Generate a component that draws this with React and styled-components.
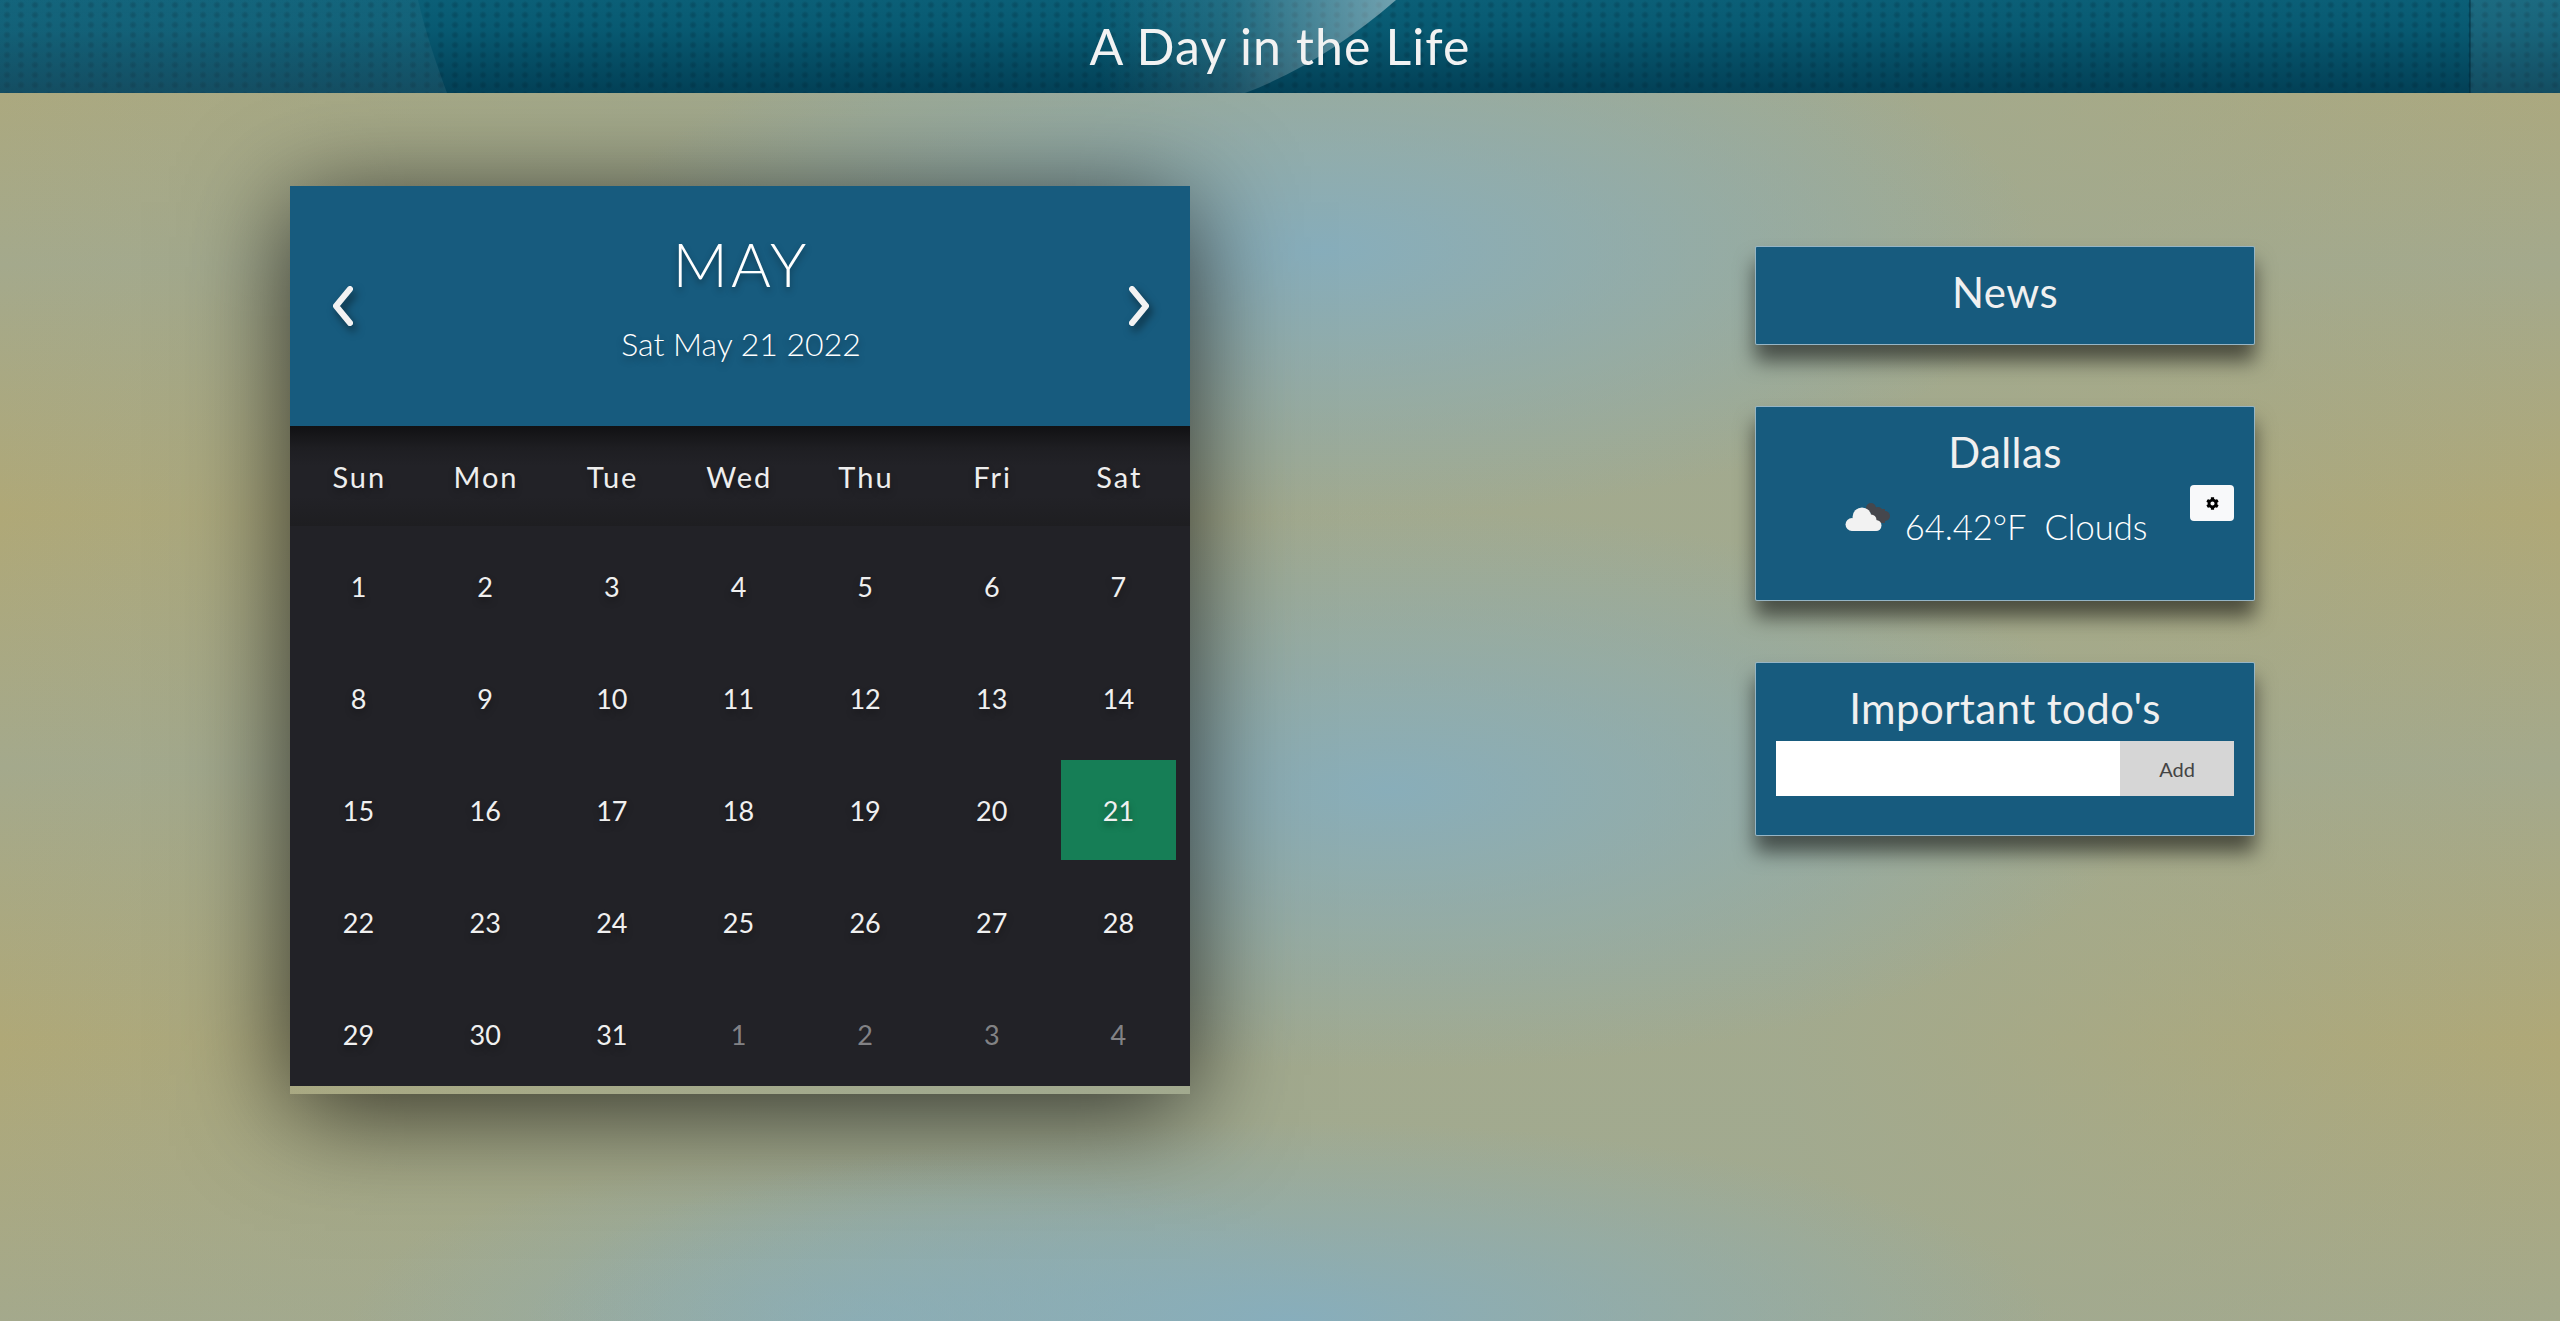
import React from "react";
import styled, { createGlobalStyle } from "styled-components";
import { FaCog } from "react-icons/fa";

const Global = createGlobalStyle`
  html, body { margin: 0; padding: 0; height: 100%; }
  body { font-family: "Lato", "Open Sans", sans-serif; color: #eee; overflow: hidden; }
  * { box-sizing: border-box; }
`;

const Page = styled.div`
  width: 2560px;
  height: 1321px;
  display: flex;
  flex-direction: column;
  background-color: #a4a98c;
  background-image:
    radial-gradient(ellipse 720px 270px at 1320px 250px, rgba(134,174,190,.95), rgba(134,174,190,0)),
    radial-gradient(ellipse 760px 280px at 1390px 790px, rgba(134,174,190,.9), rgba(134,174,190,0)),
    radial-gradient(ellipse 760px 200px at 1290px 1321px, rgba(134,174,190,.95), rgba(134,174,190,0)),
    radial-gradient(ellipse 520px 170px at 870px 1321px, rgba(134,174,190,.65), rgba(134,174,190,0)),
    linear-gradient(90deg, rgba(160,170,146,0) 0, rgba(160,170,146,.35) 12%, rgba(160,170,146,.85) 35%, rgba(160,170,146,.85) 70%, rgba(160,170,146,.2) 92%, rgba(160,170,146,0) 100%),
    linear-gradient(180deg,
      rgba(176,168,118,.6) 7%, rgba(164,169,140,.2) 20%, rgba(176,168,118,.95) 39%,
      rgba(164,169,140,.2) 58%, rgba(176,168,118,.95) 79%, rgba(164,169,140,.1) 100%);
`;

const Banner = styled.header`
  position: relative;
  flex: none;
  height: 93px;
  display: flex;
  align-items: center;
  justify-content: center;
  overflow: hidden;
  background-color: #04506b;
  background-image:
    radial-gradient(circle at 7px 5px, rgba(0,25,40,.24) 0, rgba(0,25,40,.16) 2px, rgba(0,25,40,0) 4px),
    linear-gradient(180deg, #0b5f77 0%, #085a72 30%, #024056 100%);
  background-size: 14px 10px, 100% 100%;
`;

const Swoosh = styled.svg`
  position: absolute;
  inset: 0;
  width: 100%;
  height: 100%;
`;

const BannerTitle = styled.h1`
  position: relative;
  margin: 0;
  font-size: 50px;
  font-weight: 400;
  letter-spacing: 1.1px;
  line-height: 93px;
  color: #f2f2f2;
`;

const Main = styled.main`
  display: flex;
  align-items: flex-start;
  padding: 93px 0 0 290px;
`;

const Calendar = styled.section`
  width: 900px;
  height: 908px;
  box-shadow: 0 16px 100px rgba(0,0,0,.72);
  text-shadow: 0 4px 7px rgba(0,0,0,.35);
`;

const MonthBar = styled.div`
  height: 240px;
  background: #175b7e;
  display: flex;
  align-items: center;
  justify-content: space-between;
  padding: 0 38px 0 40px;
`;

const Arrow = styled.svg`
  width: 28px;
  height: 42px;
  filter: drop-shadow(3px 5px 4px rgba(0,0,0,.5));
`;

const MonthText = styled.div`
  text-align: center;
  padding-bottom: 20px;
`;

const MonthName = styled.h2`
  margin: 0 0 24px;
  font-size: 61px;
  line-height: 72px;
  font-weight: 300;
  letter-spacing: 3px;
  text-transform: uppercase;
  color: #fff;
`;

const DateLine = styled.p`
  margin: 0;
  font-size: 32px;
  line-height: 40px;
  font-weight: 300;
  color: #fff;
`;

const Weekdays = styled.div`
  height: 100px;
  display: grid;
  grid-template-columns: repeat(7, 126.67px);
  padding-left: 6px;
  align-items: center;
  background: linear-gradient(180deg, #111113 0, #1e1e22 22px, #222227 40px, #222227 70px, #1e1e21 100%);
`;

const Weekday = styled.div`
  text-align: center;
  font-size: 29px;
  font-weight: 400;
  letter-spacing: 2px;
`;

const DayGrid = styled.div`
  height: 560px;
  background: #222227;
  display: grid;
  grid-template-columns: repeat(7, 115px);
  grid-auto-rows: 100px;
  column-gap: 11.67px;
  row-gap: 12px;
  padding: 10px 0 0 11px;
`;

const Day = styled.div`
  display: flex;
  align-items: center;
  justify-content: center;
  font-size: 27px;
  font-weight: 400;
  color: ${p => (p.$muted ? "rgba(255,255,255,.45)" : "#f0f0f0")};
  background: ${p => (p.$today ? "#167e56" : "transparent")};
  ${p => p.$muted && "text-shadow: none;"}
`;

const Side = styled.aside`
  width: 500px;
  margin: 60px 0 0 565px;
  display: flex;
  flex-direction: column;
  gap: 61px;
`;

const Card = styled.div`
  border: 1px solid rgba(255,255,255,.55);
  border-radius: 2px;
  background: #175b7e;
  padding: 19px 20px ${p => p.$pad || 25}px;
  box-shadow: 0 16px 20px rgba(0,0,0,.55);
`;

const CardTitle = styled.h3`
  margin: 0 0 7px;
  font-size: 42px;
  line-height: 52px;
  font-weight: 400;
  letter-spacing: .4px;
  text-align: center;
  color: #f0f0f0;
`;

const NewsCard = styled(Card)`
  padding-bottom: 19px;
`;

const WeatherRow = styled.div`
  display: grid;
  grid-template-columns: 1fr auto 1fr;
  align-items: start;
  height: 90px;
`;

const Conditions = styled.div`
  grid-column: 2;
  display: flex;
  align-items: flex-start;
  gap: 15px;
  margin-right: 18px;
  padding-top: 18px;
`;

const CloudIcon = styled.svg`
  width: 45px;
  height: 28px;
  flex: none;
`;

const Temp = styled.span`
  font-size: 34.500px;
  line-height: 48px;
  font-weight: 300;
  color: #fff;
  white-space: pre;
`;

const GearButton = styled.button`
  grid-column: 3;
  justify-self: end;
  width: 44px;
  height: 36px;
  padding: 0;
  border: 0;
  border-radius: 4px;
  background: #f8f9fa;
  color: #000;
  display: flex;
  align-items: center;
  justify-content: center;
  font-size: 13px;
`;

const TodoForm = styled.form`
  display: flex;
  height: 55px;
`;

const TodoInput = styled.input`
  width: 344px;
  border: 0;
  padding: 0 12px;
  background: #fff;
  outline: none;
`;

const AddButton = styled.button`
  flex: 1;
  border: 0;
  background: #d6d6d6;
  color: #444;
  font: 400 20px "Lato", sans-serif;
`;

const WEEK = ["Sun", "Mon", "Tue", "Wed", "Thu", "Fri", "Sat"];
const DAYS = Array.from({ length: 31 }, (_, i) => i + 1);

export default function App() {
  return (
    <Page>
      <Global />
      <Banner>
        <Swoosh viewBox="0 0 2560 93" preserveAspectRatio="none">
          <defs>
            <linearGradient id="glow" x1="0" x2="1" y1="0" y2="0">
              <stop offset="0" stopColor="#fff" stopOpacity="0" />
              <stop offset="0.45" stopColor="#fff" stopOpacity=".1" />
              <stop offset="1" stopColor="#fff" stopOpacity=".42" />
            </linearGradient>
            <linearGradient id="left" x1="0" x2="0" y1="0" y2="1">
              <stop offset="0" stopColor="#fff" stopOpacity=".035" />
              <stop offset="1" stopColor="#fff" stopOpacity=".07" />
            </linearGradient>
          </defs>
          <path d="M0 0H418C425 30 435 60 447 93H0Z" fill="url(#left)" />
          <path d="M1100 0H1396C1350 40 1300 72 1245 93H1100Z" fill="url(#glow)" />
          <rect x="2470" y="0" width="90" height="93" fill="#fff" opacity=".07" />
          <rect x="2469" y="0" width="2" height="93" fill="#00202e" opacity=".35" />
        </Swoosh>
        <BannerTitle>A Day in the Life</BannerTitle>
      </Banner>
      <Main>
        <Calendar>
          <MonthBar>
            <Arrow viewBox="0 0 28 42">
              <path d="M20 4 6 21l14 17" fill="none" stroke="#f2f2f2" strokeWidth="6" strokeLinecap="round" strokeLinejoin="round" />
            </Arrow>
            <MonthText>
              <MonthName>May</MonthName>
              <DateLine>Sat May 21 2022</DateLine>
            </MonthText>
            <Arrow viewBox="0 0 28 42">
              <path d="M8 4l14 17L8 38" fill="none" stroke="#f2f2f2" strokeWidth="6" strokeLinecap="round" strokeLinejoin="round" />
            </Arrow>
          </MonthBar>
          <Weekdays>
            {WEEK.map(d => <Weekday key={d}>{d}</Weekday>)}
          </Weekdays>
          <DayGrid>
            {DAYS.map(d => <Day key={d} $today={d === 21}>{d}</Day>)}
            {[1, 2, 3, 4].map(d => <Day key={"n" + d} $muted>{d}</Day>)}
          </DayGrid>
        </Calendar>
        <Side>
          <NewsCard>
            <CardTitle>News</CardTitle>
          </NewsCard>
          <Card>
            <CardTitle>Dallas</CardTitle>
            <WeatherRow>
              <Conditions>
                <CloudIcon viewBox="0 0 45 28">
                  <g fill="#45474d">
                    <circle cx="26" cy="5" r="5" />
                    <circle cx="33" cy="9" r="5" />
                    <circle cx="40" cy="13" r="5" />
                    <rect x="26" y="6" width="14" height="14" />
                  </g>
                  <g fill="#f2f2f2">
                    <rect x="6" y="18" width="26" height="10" rx="2" />
                    <circle cx="7" cy="21.500" r="6.500" />
                    <circle cx="17" cy="14" r="9.500" />
                    <circle cx="26" cy="17" r="5.500" />
                    <circle cx="31" cy="22.500" r="5.500" />
                  </g>
                </CloudIcon>
                <Temp>{"64.42°F  Clouds"}</Temp>
              </Conditions>
              <GearButton type="button" aria-label="Settings"><FaCog /></GearButton>
            </WeatherRow>
          </Card>
          <Card $pad={39}>
            <CardTitle>Important todo's</CardTitle>
            <TodoForm onSubmit={e => e.preventDefault()}>
              <TodoInput type="text" />
              <AddButton type="button">Add</AddButton>
            </TodoForm>
          </Card>
        </Side>
      </Main>
    </Page>
  );
}
